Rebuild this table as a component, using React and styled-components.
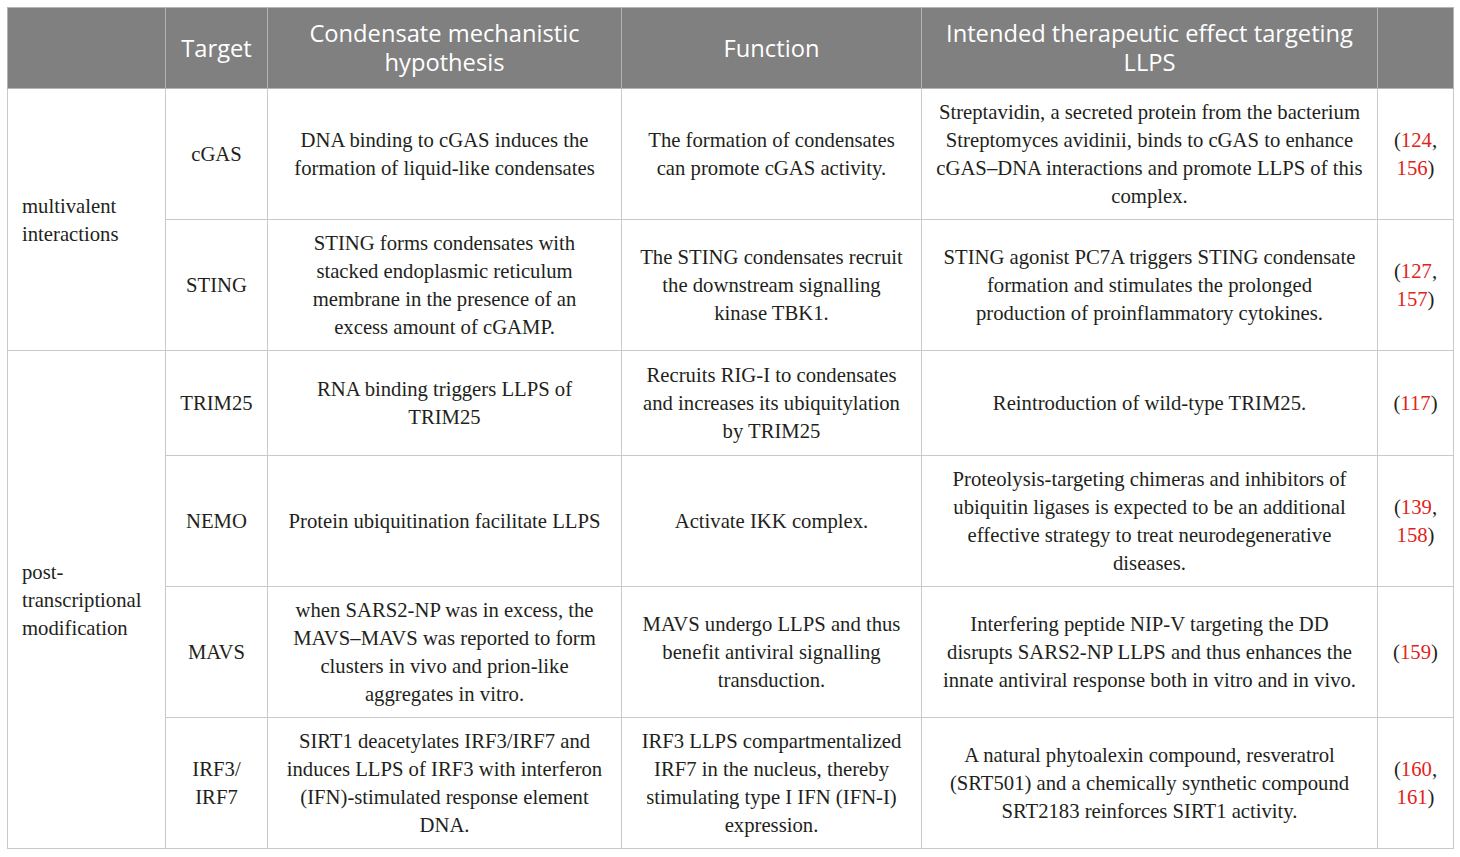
import React from 'react'
import styled, { createGlobalStyle } from 'styled-components';

const Global = createGlobalStyle`
  body { margin: 0; background: #fff; }
`;

const Page = styled.div`
  padding: 7px;
`;

const Table = styled.table`
  border-collapse: collapse;
  table-layout: fixed;
  width: 1446px;
  border: 1px solid #c9c9c9;
`;

const Head = styled.th`
  background: #808080;
  color: #fff;
  font-family: 'Open Sans', 'Liberation Sans', sans-serif;
  font-weight: 400;
  font-size: 23.7px;
  line-height: 29px;
  height: 80px;
  padding: 0 12px;
  border: 1px solid #b4b4b4;
  text-align: center;
  vertical-align: middle;
`;

const Cell = styled.td`
  font-family: 'Liberation Serif', 'Times New Roman', serif;
  font-size: 20.7px;
  line-height: 28px;
  color: #231f20;
  height: ${p => p.$h || 130}px;
  padding: 0 ${p => p.$pad || 16}px;
  border: 1px solid #c9c9c9;
  text-align: ${p => (p.$left ? 'left' : 'center')};
  vertical-align: middle;
`;

const Ref = styled.span`
  color: #e2231a;
`;

// arrays hold the line breaks as set in the source table
const rows = [
  {
    group: 'multivalent interactions',
    span: 2,
    target: 'cGAS',
    hyp: 'DNA binding to cGAS induces the formation of liquid-like condensates',
    fn: 'The formation of condensates can promote cGAS activity.',
    effect: 'Streptavidin, a secreted protein from the bacterium Streptomyces avidinii, binds to cGAS to enhance cGAS–DNA interactions and promote LLPS of this complex.',
    refs: ['124', '156'],
  },
  {
    target: 'STING',
    hyp: 'STING forms condensates with stacked endoplasmic reticulum membrane in the presence of an excess amount of cGAMP.',
    fn: 'The STING condensates recruit the downstream signalling kinase TBK1.',
    effect: [
      'STING agonist PC7A triggers STING condensate',
      'formation and stimulates the prolonged',
      'production of proinflammatory cytokines.',
    ],
    refs: ['127', '157'],
  },
  {
    group: 'post-transcriptional modification',
    span: 4,
    target: 'TRIM25',
    h: 104,
    hyp: 'RNA binding triggers LLPS of TRIM25',
    fn: 'Recruits RIG-I to condensates and increases its ubiquitylation by TRIM25',
    effect: 'Reintroduction of wild-type TRIM25.',
    refs: ['117'],
  },
  {
    target: 'NEMO',
    hyp: 'Protein ubiquitination facilitate LLPS',
    fn: 'Activate IKK complex.',
    effect: 'Proteolysis-targeting chimeras and inhibitors of ubiquitin ligases is expected to be an additional effective strategy to treat neurodegenerative diseases.',
    refs: ['139', '158'],
  },
  {
    target: 'MAVS',
    hyp: 'when SARS2-NP was in excess, the MAVS–MAVS was reported to form clusters in vivo and prion-like aggregates in vitro.',
    fn: 'MAVS undergo LLPS and thus benefit antiviral signalling transduction.',
    effect: [
      'Interfering peptide NIP-V targeting the DD',
      'disrupts SARS2-NP LLPS and thus enhances the',
      'innate antiviral response both in vitro and in vivo.',
    ],
    refs: ['159'],
  },
  {
    target: ['IRF3/', 'IRF7'],
    hyp: 'SIRT1 deacetylates IRF3/IRF7 and induces LLPS of IRF3 with interferon (IFN)-stimulated response element DNA.',
    fn: 'IRF3 LLPS compartmentalized IRF7 in the nucleus, thereby stimulating type I IFN (IFN-I) expression.',
    effect: 'A natural phytoalexin compound, resveratrol (SRT501) and a chemically synthetic compound SRT2183 reinforces SIRT1 activity.',
    refs: ['160', '161'],
  },
];

function Lines({ text }) {
  if (!Array.isArray(text)) return text;
  return text.map((t, i) => (
    <React.Fragment key={i}>
      {i > 0 && <br />}
      {t}
    </React.Fragment>
  ));
}

function Refs({ list }) {
  return (
    <>
      (
      {list.map((r, i) => (
        <React.Fragment key={r}>
          <Ref>{r}</Ref>
          {i < list.length - 1 ? ', ' : ''}
        </React.Fragment>
      ))}
      )
    </>
  );
}

function App() {
  return (
    <Page>
      <Global />
      <Table>
        <colgroup>
          <col style={{ width: 158 }} />
          <col style={{ width: 102 }} />
          <col style={{ width: 354 }} />
          <col style={{ width: 300 }} />
          <col style={{ width: 456 }} />
          <col style={{ width: 76 }} />
        </colgroup>
        <thead>
          <tr>
            <Head />
            <Head>Target</Head>
            <Head>Condensate mechanistic hypothesis</Head>
            <Head>Function</Head>
            <Head>Intended therapeutic effect targeting LLPS</Head>
            <Head />
          </tr>
        </thead>
        <tbody>
          {rows.map((r, i) => (
            <tr key={i}>
              {r.group && (
                <Cell rowSpan={r.span} $left $h={r.h} $pad={14}>{r.group}</Cell>
              )}
              <Cell $h={r.h} $pad={6}><Lines text={r.target} /></Cell>
              <Cell $h={r.h} $pad={18}><Lines text={r.hyp} /></Cell>
              <Cell $h={r.h} $pad={14}><Lines text={r.fn} /></Cell>
              <Cell $h={r.h} $pad={12}><Lines text={r.effect} /></Cell>
              <Cell $h={r.h} $pad={10}><Refs list={r.refs} /></Cell>
            </tr>
          ))}
        </tbody>
      </Table>
    </Page>
  );
}

export default App
